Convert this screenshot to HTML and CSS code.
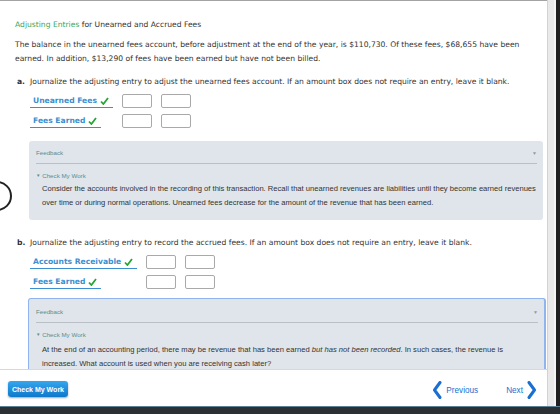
FILE: index.html
```html
<!DOCTYPE html>
<html lang="en">
<head>
  <meta charset="UTF-8" />
  <title>Adjusting Entries</title>
  <link rel="stylesheet" href="styles.css">
</head>
<body>
  <div class="frame">
    <div class="window">
      <div class="main">
        <!-- Question -->
        <div class="content">
          <div class="ring"></div>
          <div class="title"><span class="green">Adjusting Entries</span> for Unearned and Accrued Fees</div>
          <p class="intro">The balance in the unearned fees account, before adjustment at the end of the year, is $110,730. Of these fees, $68,655 have been earned. In addition, $13,290 of fees have been earned but have not been billed.</p>

          <div class="part"><b>a.</b><span>Journalize the adjusting entry to adjust the unearned fees account. If an amount box does not require an entry, leave it blank.</span></div>
          <div class="entries">
            <span class="account">Unearned Fees <svg class="tick" width="9" height="8" viewBox="0 0 9 8"><polyline points="1,4.5 3.4,7 8,1" fill="none" stroke="#27a533" stroke-width="1.8"/></svg></span>
            <span class="box"></span><span class="box"></span>
            <span class="account">Fees Earned <svg class="tick" width="9" height="8" viewBox="0 0 9 8"><polyline points="1,4.5 3.4,7 8,1" fill="none" stroke="#27a533" stroke-width="1.8"/></svg></span>
            <span class="box"></span><span class="box"></span>
          </div>

          <div class="feedback">
            <div class="fb-head">Feedback <span class="fb-arrow">&#9660;</span></div>
            <div class="fb-check"><span class="tri">&#9660;</span> Check My Work</div>
            <p class="fb-text">Consider the accounts involved in the recording of this transaction. Recall that unearned revenues are liabilities until they become earned revenues over time or during normal operations. Unearned fees decrease for the amount of the revenue that has been earned.</p>
          </div>

          <div class="part part-b"><b>b.</b><span>Journalize the adjusting entry to record the accrued fees. If an amount box does not require an entry, leave it blank.</span></div>
          <div class="entries">
            <span class="account">Accounts Receivable <svg class="tick" width="9" height="8" viewBox="0 0 9 8"><polyline points="1,4.5 3.4,7 8,1" fill="none" stroke="#27a533" stroke-width="1.8"/></svg></span>
            <span class="box"></span><span class="box"></span>
            <span class="account">Fees Earned <svg class="tick" width="9" height="8" viewBox="0 0 9 8"><polyline points="1,4.5 3.4,7 8,1" fill="none" stroke="#27a533" stroke-width="1.8"/></svg></span>
            <span class="box"></span><span class="box"></span>
          </div>

          <div class="feedback active">
            <div class="fb-head">Feedback <span class="fb-arrow">&#9660;</span></div>
            <div class="fb-check"><span class="tri">&#9660;</span> Check My Work</div>
            <p class="fb-text">At the end of an accounting period, there may be revenue that has been earned <em>but has not been recorded</em>. In such cases, the revenue is increased. What account is used when you are receiving cash later?</p>
          </div>
        </div>

        <!-- Footer -->
        <div class="footer">
          <button class="check-btn">Check My Work</button>
          <div class="pager">
            <a class="prev" href="#">
              <svg width="10" height="18" viewBox="0 0 10 18"><polyline points="8,1.5 2.5,9 8,16.5" fill="none" stroke="#1a6fd0" stroke-width="3" stroke-linejoin="round" stroke-linecap="round"/></svg>
              Previous
            </a>
            <a class="next" href="#">
              Next
              <svg width="10" height="18" viewBox="0 0 10 18"><polyline points="2,1.5 7.5,9 2,16.5" fill="none" stroke="#1a6fd0" stroke-width="3" stroke-linejoin="round" stroke-linecap="round"/></svg>
            </a>
          </div>
        </div>
      </div>
      <div class="scrollbar"></div>
      <div class="edge"></div>
    </div>
    <div class="taskbar"></div>
  </div>
</body>
</html>
```

FILE: styles.css
```css
* {
  box-sizing: border-box;
  margin: 0;
  padding: 0;
}

body {
  width: 560px;
  height: 414px;
  overflow: hidden;
  background: #fff;
  font-family: "DejaVu Sans", Verdana, sans-serif;
  color: #333;
}

.frame {
  display: flex;
  flex-direction: column;
  height: 414px;
}

.window {
  display: flex;
  height: 406px;
}

.main {
  flex: 1;
  display: flex;
  flex-direction: column;
  border-top: 1px solid #a3a3a3;
}

.content {
  position: relative;
  height: 369px;
  overflow: hidden;
  padding: 17px 0 0 15px;
  font-size: 7.6px;
  line-height: 14px;
}

.ring {
  position: absolute;
  left: -18px;
  top: 180px;
  width: 30px;
  height: 30px;
  border: 2px solid #222;
  border-radius: 50%;
}

.green {
  color: #3aa65a;
}

.intro {
  margin-top: 6px;
  padding-right: 20px;
}

.part {
  display: flex;
  margin-top: 9px;
  padding-left: 2px;
}

.part b {
  flex: none;
  width: 13px;
}

.part-b {
  margin-top: 16px;
}

.entries {
  display: grid;
  grid-template-columns: auto 30px 30px;
  column-gap: 9px;
  row-gap: 6px;
  align-items: center;
  justify-content: start;
  padding: 5px 0 0 15px;
}

.account {
  justify-self: start;
  display: flex;
  align-items: center;
  gap: 3px;
  padding: 0 4px 0 3px;
  border-bottom: 1.5px solid #3b8fd0;
  color: #3b8fd0;
  font-weight: bold;
  font-size: 7.6px;
  line-height: 12px;
}

.box {
  height: 14px;
  border: 1px solid #a9a9a9;
  border-radius: 2px;
  background: #fff;
}

.feedback {
  margin: 13px 4px 0 14px;
  padding: 7px 6px 10px 7px;
  background: #dfe5ea;
  border-radius: 3px;
  font-family: "Liberation Sans", Arial, sans-serif;
}

.feedback.active {
  margin: 9px 1px 0 13px;
  padding: 8px 6px 8px 7px;
  border: 1.5px solid #8fb4ee;
  border-right-width: 2px;
}

.active .fb-text {
  margin-top: 3px;
}

.fb-head {
  display: flex;
  justify-content: space-between;
  padding-bottom: 5px;
  border-bottom: 1.5px solid #b9bfc4;
  color: #5b8d8d;
  font-size: 6.2px;
  line-height: 10px;
}

.fb-arrow {
  color: #999;
  font-size: 5px;
}

.fb-check {
  margin-top: 7px;
  color: #5b8d8d;
  font-size: 6.2px;
  line-height: 10px;
}

.tri {
  font-size: 4.5px;
  vertical-align: 1px;
}

.fb-text {
  margin-top: 1px;
  padding-left: 6px;
  color: #333;
  font-size: 7.6px;
  line-height: 14px;
}

.footer {
  height: 37px;
  display: flex;
  align-items: center;
  justify-content: space-between;
  padding: 2px 10px 0 8px;
  border-top: 1px solid #d8d8d8;
  background: #fff;
}

.check-btn {
  width: 60px;
  height: 16px;
  border: none;
  border-radius: 3px;
  background: linear-gradient(#35a6ee, #0f78cc);
  box-shadow: 0 1px 2px rgba(0, 0, 0, 0.35);
  color: #fff;
  font-family: "Liberation Sans", Arial, sans-serif;
  font-size: 7px;
  font-weight: bold;
}

.pager {
  display: flex;
  align-items: center;
  gap: 28px;
  margin-top: 2px;
}

.pager a {
  display: flex;
  align-items: center;
  gap: 4px;
  color: #1a6fd0;
  text-decoration: none;
  font-family: "Liberation Sans", Arial, sans-serif;
  font-size: 8.2px;
}

.scrollbar {
  width: 9px;
  background: #e9e9e9;
  border-left: 1px solid #d2d2d2;
  border-right: 2px solid #f4f4f4;
}

.edge {
  width: 4px;
  background: #1f1f1f;
}

.taskbar {
  height: 8px;
  background: #2b3034;
  border-top: 1px solid #5f7f96;
}
```
